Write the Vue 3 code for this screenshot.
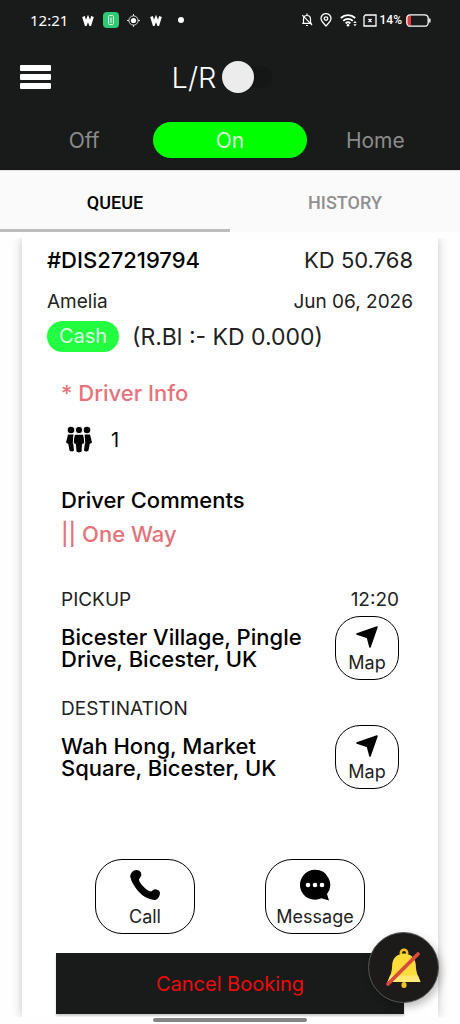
<script setup>
import { ref } from 'vue'

const leftRight = ref(false)
const mode = ref('On')
const modes = ['Off', 'On', 'Home']
const tab = ref('QUEUE')
const tabs = ['QUEUE', 'HISTORY']

const stops = [
  { label: 'PICKUP', time: '12:20', address: 'Bicester Village, Pingle Drive, Bicester, UK' },
  { label: 'DESTINATION', time: '', address: 'Wah Hong, Market Square, Bicester, UK' }
]
</script>

<template>
  <div class="page">
    <header class="top">
      <div class="status">
        <div class="status-group">
          <span class="clock">12:21</span>
          <svg class="w-mark" width="12" height="11" viewBox="0 0 12 11"><path d="M1.5 1.5 3.8 9 6 3.5 8.2 9 10.5 1.5" fill="none" stroke="#fff" stroke-width="2.8" /></svg>
          <svg class="chip" width="16" height="16" viewBox="0 0 16 16">
            <rect width="16" height="16" rx="4" fill="#2fc873" />
            <rect x="5.5" y="3.5" width="5" height="9" rx="1" fill="none" stroke="#d9f7e6" />
            <path d="M8 5.5v2M8 9v2M7 8h2" stroke="#d9f7e6" fill="none" />
          </svg>
          <svg class="target" width="13" height="13" viewBox="0 0 13 13">
            <circle cx="6.5" cy="6.5" r="4.6" fill="none" stroke="#ddd" />
            <circle cx="6.5" cy="6.5" r="2.6" fill="#fff" />
            <path d="M6.5 0v2M6.5 11v2M0 6.5h2M11 6.5h2" stroke="#ddd" />
          </svg>
          <svg class="w-mark" width="12" height="11" viewBox="0 0 12 11"><path d="M1.5 1.5 3.8 9 6 3.5 8.2 9 10.5 1.5" fill="none" stroke="#fff" stroke-width="2.8" /></svg>
          <span class="dot"></span>
        </div>
        <div class="status-group">
          <svg width="12" height="14" viewBox="0 0 12 14" fill="none" stroke="#fff" stroke-width="1.2">
            <path d="M1.2 10.3h9.6M2.5 10V6a3.5 3.5 0 0 1 7 0v4M6 .6v2M5 12.5h2M1.3 2.2l9.8 10" />
          </svg>
          <svg class="pin" width="12" height="14" viewBox="0 0 12 14" fill="none" stroke="#fff" stroke-width="1.3">
            <path d="M6 13C3.5 10.3 1 8 1 5.600a5 5 0 0 1 10 0C11 8 8.500 10.300 6 13Z" />
            <circle cx="6" cy="5.600" r="1.800" />
          </svg>
          <svg class="wifi" width="17" height="14" viewBox="0 0 17 14" fill="none" stroke="#fff" stroke-width="1.8">
            <path d="M.8 5a10.500 10.500 0 0 1 14.400 0M3.200 7.800a7 7 0 0 1 9.600 0M5.600 10.300a3.600 3.600 0 0 1 4.800 0" />
            <circle cx="8" cy="12.300" r="1.300" fill="#fff" stroke="none" />
            <path d="m13.300 10 1.700-2 1.700 2zM13.300 11.200l1.700 2 1.700-2z" fill="#fff" stroke="none" />
          </svg>
          <svg class="sim" width="14" height="13" viewBox="0 0 14 13" fill="none" stroke="#fff" stroke-width="1.3">
            <path d="M2.500 1H13v11H1V2.500ZM5.500 5l3 3M8.500 5l-3 3" />
          </svg>
          <span class="percent">14%</span>
          <svg class="battery" width="25" height="13" viewBox="0 0 25 13">
            <path d="M5 1.500H3.500a2.500 2.500 0 0 0-2.500 2.500v5a2.500 2.500 0 0 0 2.500 2.500H5Z" fill="#e2383f" />
            <rect x=".8" y=".8" width="21.400" height="11.400" rx="3.500" fill="none" stroke="#fff" stroke-width="1.3" />
            <path d="M23.800 4.500v4" stroke="#fff" stroke-width="1.4" />
          </svg>
        </div>
      </div>

      <div class="bar">
        <button class="menu" type="button" aria-label="Menu"><span></span><span></span><span></span></button>
        <label class="lr">L/R<input v-model="leftRight" class="switch" type="checkbox" role="switch" /></label>
      </div>

      <nav class="modes">
        <button v-for="m in modes" :key="m" type="button" :class="{ active: mode === m }" @click="mode = m">{{ m }}</button>
      </nav>
    </header>

    <nav class="tabs">
      <button v-for="t in tabs" :key="t" type="button" :class="{ active: tab === t }" @click="tab = t">{{ t }}</button>
    </nav>

    <main class="card">
      <div class="row title-row">
        <h1>#DIS27219794</h1>
        <span>KD 50.768</span>
      </div>
      <div class="row name-row">
        <span>Amelia</span>
        <span>Jun 06, 2026</span>
      </div>
      <div class="pay-row">
        <span class="cash">Cash</span>
        <span class="balance">(R.Bl :- KD 0.000)</span>
      </div>

      <section class="details">
        <p class="info red">* Driver Info</p>
        <div class="people">
          <svg width="28" height="28" viewBox="0 0 28 28">
            <circle cx="6" cy="4" r="3.300" /><circle cx="22" cy="4" r="3.300" />
            <path d="M3 8.500h5.500L8 16l1 8.500q-2 2-4.500 0L3.300 18 1 16.500Z" />
            <path d="M25 8.500h-5.500L20 16l-1 8.500q2 2 4.500 0L24.700 18l2.300-1.500Z" />
            <g stroke="#fff" stroke-width="1">
              <circle cx="14" cy="4" r="3.700" />
              <path d="M10.500 8.200h7Q19 9 19.300 12l.5 5.500-2.300.8-.5 7.700q-3 2-6 0l-.5-7.700-2.300-.8.500-5.500Q9 9 10.500 8.200Z" />
            </g>
          </svg>
          <span>1</span>
        </div>
        <h2>Driver Comments</h2>
        <p class="comment red">|| One Way</p>

        <div v-for="stop in stops" :key="stop.label" class="stop">
          <div class="stop-head"><span>{{ stop.label }}</span><span>{{ stop.time }}</span></div>
          <div class="stop-body">
            <p>{{ stop.address }}</p>
            <button class="map" type="button">
              <svg width="22" height="22" viewBox="0 0 22 22"><path d="M21 1 14 21 11.500 11.500 1 8Z" stroke="#000" stroke-width="1.6" stroke-linejoin="round" /></svg>
              Map
            </button>
          </div>
        </div>
      </section>

      <div class="actions">
        <button type="button">
          <svg width="32" height="32" viewBox="0 0 32 32"><path d="M2 4.500Q4.500.5 9 1.200q3.500 1 3.300 5.300L10 10.500q0 2.500 4.300 7t7.700 5l3.500-2.300q4 0 5.300 2.800.8 2.500-.8 4.800-1.500 3.400-5 3.100Q16 30 9.500 22.500 3 15 1.300 8 1 6 2 4.500Z" /></svg>
          Call
        </button>
        <button type="button">
          <svg width="32" height="32" viewBox="0 0 32 32">
            <path d="M16 .8A15 15 0 1 0 22.500 29.300L30 31.500 28 25A15 15 0 0 0 16 .8Z" />
            <g fill="#fff"><circle cx="9" cy="16" r="2.300" /><circle cx="16" cy="16" r="2.300" /><circle cx="23" cy="16" r="2.300" /></g>
          </svg>
          Message
        </button>
      </div>
      <button class="cancel" type="button">Cancel Booking</button>
    </main>

    <button class="mute" type="button" aria-label="Mute notifications">
      <svg width="40" height="44" viewBox="0 0 40 44">
        <circle cx="20" cy="7" r="3.200" fill="none" stroke="#f4c421" stroke-width="2.500" />
        <rect x="17.500" y="36" width="5" height="6" rx="2.500" fill="#f4c421" />
        <path d="M20 7.500C12 8 8.500 13 8.200 19q0 8-4.700 17h33q-4.700-9-4.700-17C31.500 13 28 8 20 7.500Z" fill="#fbdc3a" />
        <path d="M6 29.500h28L36.500 36h-33Z" fill="#ffe873" />
        <path d="M4 38 34 8" stroke="#d84a3b" stroke-width="3.800" stroke-linecap="round" />
      </svg>
    </button>
    <div class="gesture"></div>
  </div>
</template>

<style>
body {
  background: #fff;
}
</style>

<style scoped>
.page {
  min-height: 100vh;
  background: #fefefe;
  color: #000;
  font-family: Inter, "Noto Sans", sans-serif;
  font-size: 20px;
  overflow: hidden;
}
button {
  padding: 0;
  border: 0;
  background: none;
  color: inherit;
  font: inherit;
}
h1, h2, p {
  margin: 0;
  font-size: 22px;
  font-weight: 500;
}
.top {
  background: #191b1a;
  color: #fff;
  padding-bottom: 12px;
}
.status {
  display: flex;
  align-items: center;
  justify-content: space-between;
  height: 40px;
  padding: 0 29px 0 30px;
}
.status-group {
  display: flex;
  align-items: center;
}
.clock {
  margin-right: 14px;
  font: 15px "Noto Sans", sans-serif;
}
.chip {
  margin: 0 8px 0 9px;
}
.target {
  margin-right: 10px;
}
.dot {
  width: 6px;
  height: 6px;
  margin-left: 16px;
  border-radius: 50%;
  background: #fff;
}
.pin {
  margin-left: 7px;
}
.wifi {
  margin: 0 6px 0 8px;
}
.percent {
  margin: 0 4px 0 3px;
  font: 500 12px Roboto, sans-serif;
}
.bar {
  display: grid;
  grid-template-columns: 1fr auto 1fr;
  align-items: center;
  height: 74px;
  padding: 0 20px;
}
.menu {
  display: flex;
  flex-direction: column;
  gap: 3px;
  width: 31px;
}
.menu span {
  height: 6px;
  border-radius: 1px;
  background: #fff;
}
.lr {
  display: flex;
  align-items: center;
  gap: 6px;
  margin-right: 16px;
  font-size: 29px;
  font-weight: 300;
}
.switch {
  appearance: none;
  display: flex;
  align-items: center;
  width: 50px;
  height: 22px;
  margin: 0;
  border-radius: 11px;
  background: #151716;
}
.switch::before {
  content: "";
  width: 32px;
  height: 32px;
  flex: none;
  border-radius: 50%;
  background: #ececec;
}
.switch:checked {
  justify-content: flex-end;
}
.modes {
  display: grid;
  grid-template-columns: repeat(3, 1fr);
  padding-top: 8px;
}
.modes button {
  height: 36px;
  border-radius: 18px;
  color: #8b8c8c;
  font-size: 21px;
}
.modes button:first-child {
  margin-left: 15px;
}
.modes button:last-child {
  margin-right: 16px;
}
.modes .active {
  background: #00ff00;
  color: #d8ffd8;
}
.tabs {
  display: grid;
  grid-template-columns: 1fr 1fr;
  background: #fafafa;
  box-shadow: inset 0 1px #e4e4e4;
}
.tabs button {
  height: 62px;
  padding-top: 2px;
  color: #909090;
  font: 500 18px Roboto, sans-serif;
}
.tabs .active {
  box-shadow: inset 0 -3px #bdbdbd;
  color: #000;
}
.card {
  margin: 6px 22px 0;
  padding-bottom: 3px;
  background: #fff;
  box-shadow: 0 0 10px #c4c4c4;
  clip-path: inset(0 -12px);
}
.row {
  display: flex;
  justify-content: space-between;
  align-items: center;
  padding: 0 25px;
}
.title-row {
  height: 44px;
  font-size: 22px;
}
.title-row span {
  color: #222;
}
.name-row {
  height: 39px;
  font-size: 19px;
  color: #222;
}
.pay-row {
  display: flex;
  align-items: center;
  gap: 13px;
  padding-left: 25px;
  color: #222;
}
.cash {
  width: 72px;
  line-height: 31px;
  border-radius: 16px;
  background: #22ff40;
  color: #dcffe0;
  text-align: center;
}
.balance {
  font-size: 23px;
  line-height: 30px;
}
.details {
  padding: 26px 39px 0;
  line-height: 30px;
}
.red {
  color: #e4737b;
}
.people {
  display: flex;
  align-items: center;
  gap: 18px;
  margin: 18px 0 31px 4px;
  height: 28px;
}
.comment {
  margin: 4px 0 39px;
}
.stop + .stop {
  margin-top: 17px;
}
.stop-head {
  display: flex;
  justify-content: space-between;
  height: 24px;
  line-height: 24px;
  font-size: 19px;
  color: #222;
}
.stop-body {
  display: flex;
  align-items: center;
  justify-content: space-between;
  gap: 24px;
  margin-top: 4px;
}
.stop-body p {
  line-height: 22px;
  max-width: 252px;
}
.map, .actions button {
  display: flex;
  flex-direction: column;
  align-items: center;
  border: 1px solid #000;
  background: #fff;
  color: #222;
  font-size: 18px;
  line-height: 22px;
}
.map {
  flex: none;
  width: 64px;
  height: 64px;
  padding-top: 9px;
  gap: 4px;
  border-radius: 25px;
}
.actions {
  display: flex;
  justify-content: center;
  gap: 70px;
  margin-top: 70px;
}
.actions button {
  width: 100px;
  height: 75px;
  padding-top: 9px;
  gap: 5px;
  border-radius: 27px;
}
.cancel {
  display: block;
  width: calc(100% - 68px);
  height: 61px;
  margin: 19px 34px 0;
  background: #191b1a;
  color: #f00a0a;
  box-shadow: 0 2px 2px #ccc;
}
.mute {
  position: fixed;
  right: 21px;
  bottom: 21px;
  display: grid;
  place-items: center;
  width: 71px;
  height: 71px;
  border: 1px solid #555;
  border-radius: 50%;
  background: #1d1a1a;
  box-shadow: 2px 4px 8px #0004;
}
.gesture {
  position: fixed;
  bottom: 2px;
  left: 50%;
  width: 154px;
  height: 4px;
  margin-left: -77px;
  border-radius: 2px;
  background: #858585;
}
</style>
